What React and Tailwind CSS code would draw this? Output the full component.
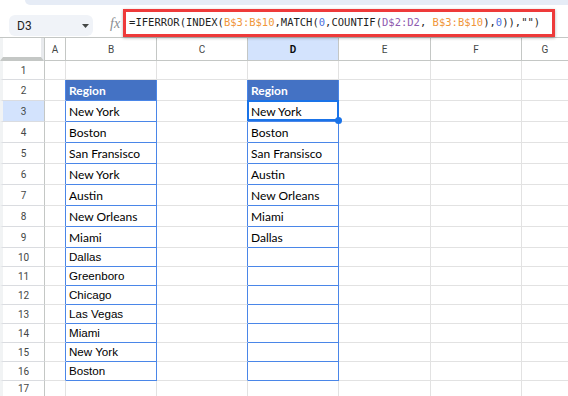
import React from "react";

const GRID = "border-[#e2e2e2]";

const cols = [
  { key: "A", w: "w-[21px]" },
  { key: "B", w: "w-[91px]" },
  { key: "C", w: "w-[91px]" },
  { key: "D", w: "w-[91px]" },
  { key: "E", w: "w-[92px]" },
  { key: "F", w: "w-[91px]" },
];

const bList = ["New York", "Boston", "San Fransisco", "New York", "Austin", "New Orleans", "Miami"];
const dList = ["New York", "Boston", "San Fransisco", "Austin", "New Orleans", "Miami", "Dallas"];
const bList2 = ["Dallas", "Greenboro", "Chicago", "Las Vegas", "Miami", "New York", "Boston"];

const rows = [
  { n: 1, h: "h-[19px]", b: "", d: "" },
  { n: 2, h: "h-[21px]", b: "Region", d: "Region", head: true },
  ...bList.map((b, i) => ({ n: i + 3, h: "h-[21px]", b, d: dList[i], calibri: true })),
  ...bList2.map((b, i) => ({ n: i + 10, h: "h-[19px]", b, d: "" })),
];

function FormulaText() {
  const dark = "text-[#1f1f1f]";
  const orange = "text-[#f0963a]";
  const blue = "text-[#4a6fdc]";
  const purple = "text-[#8e5bb0]";
  return (
    <span className="whitespace-pre font-['DejaVu_Sans_Mono',monospace] text-[10.5px]">
      <span className={dark}>=IFERROR(INDEX(</span>
      <span className={orange}>B$3:B$10</span>
      <span className={dark}>,MATCH(</span>
      <span className={blue}>0</span>
      <span className={dark}>,COUNTIF(</span>
      <span className={purple}>D$2:D2</span>
      <span className={dark}>, </span>
      <span className={orange}>B$3:B$10</span>
      <span className={dark}>),</span>
      <span className={blue}>0</span>
      <span className={dark}>)),""</span>
      <span className={dark}>)</span>
    </span>
  );
}

function TopBar() {
  return (
    <div className="h-[37px] flex flex-col">
      <div className="h-[5px] ml-[25px] bg-[#e6ecf6] rounded-bl-[12px]"></div>
      <div className="flex items-start h-[32px]">
        <div className="ml-[9px] mt-[10px] w-[84px] h-[21px] rounded-[6px] bg-[#f0f3f8] flex items-center justify-between pl-[8px] pr-[4px]">
          <span className="font-['Roboto',sans-serif] text-[12px] text-[#1f1f1f]">D3</span>
          <svg width="7" height="4" viewBox="0 0 7 4">
            <path d="M0 0h7L3.5 4z" fill="#444746" />
          </svg>
        </div>
        <span className="ml-[17px] mt-[11px] italic font-['Liberation_Serif',serif] text-[14px] leading-[16px] text-[#8a8d91]">
          fx
        </span>
        <div className="ml-[3px] mt-[4px] w-[432px] h-[28px] border-[3px] border-[#ee3a3a] bg-white shadow-[0_1px_3px_rgba(0,0,0,0.3)] flex items-center pl-[3px] relative z-10">
          <FormulaText />
        </div>
      </div>
    </div>
  );
}

function ColumnHeader() {
  return (
    <div className="flex h-[24px] border-t border-[#c4c7c5]">
      <div className="w-[45px] shrink-0 border-r border-[#c4c7c5]">
        <div className="h-full border-l-[3px] border-l-[#f1f3f4] border-r-[3px] border-r-[#e8eaed] border-b-[4px] border-b-[#c4c7c5]"></div>
      </div>
      {cols.map((c) => (
        <div
          key={c.key}
          className={`${c.w} shrink-0 border-r border-b border-[#c4c7c5] flex items-center justify-center font-['Roboto',sans-serif] text-[10px] ${
            c.key === "D" ? "bg-[#d3e3fd] font-bold text-[#0b0b0b]" : "text-[#444746]"
          }`}
        >
          {c.key}
        </div>
      ))}
      <div className="flex-1 border-b border-[#c4c7c5] flex items-center justify-center font-['Roboto',sans-serif] text-[10px] text-[#444746]">
        G
      </div>
    </div>
  );
}

function DataCell({ text, head, calibri, width, rightBlue, bottomBlue, children }) {
  const font = head || calibri ? "font-['Lato',sans-serif] text-[12px] pb-[2px]" : "font-['Liberation_Sans',sans-serif] text-[11.6px] pb-[2px]";
  return (
    <div
      className={`${width} shrink-0 border-r border-b ${rightBlue ? "border-r-[#4a86e8]" : "border-r-[#e2e2e2]"} ${
        bottomBlue ? "border-b-[#4a86e8]" : "border-b-[#e2e2e2]"
      } ${head ? "bg-[#4472c4] text-white font-bold" : "text-black"} ${font} leading-[14px] flex items-end pl-[3px] relative`}
    >
      {text}
      {children}
    </div>
  );
}

function Row({ r }) {
  const inTable = r.n >= 2;
  const selected = r.n === 3;
  return (
    <div className={`flex ${r.h}`}>
      <div
        className={`w-[45px] shrink-0 border-l-[3px] border-l-[#f1f3f4] border-r border-r-[#c4c7c5] border-b border-b-[#dadce0] flex items-center justify-center font-['Roboto',sans-serif] text-[10px] text-[#444746] ${
          selected ? "bg-[#d3e3fd]" : "bg-white"
        }`}
      >
        {r.n}
      </div>
      <div className={`w-[21px] shrink-0 border-r border-b ${inTable ? "border-r-[#4a86e8]" : "border-r-[#e2e2e2]"} border-b-[#e2e2e2]`}></div>
      <DataCell text={r.b} head={r.head} calibri={r.calibri} width="w-[91px]" rightBlue={inTable} bottomBlue={inTable} />
      <div className={`w-[91px] shrink-0 border-r border-b ${inTable ? "border-r-[#4a86e8]" : "border-r-[#e2e2e2]"} border-b-[#e2e2e2]`}></div>
      <DataCell text={r.d} head={r.head} calibri={r.calibri} width="w-[91px]" rightBlue={inTable} bottomBlue={inTable}>
        {selected && (
          <div className="absolute -left-px -top-px -right-px bottom-0 border-2 border-[#1a73e8] z-10">
            <div className="absolute -right-[5px] -bottom-[5px] w-[7px] h-[7px] rounded-full bg-[#1a73e8]"></div>
          </div>
        )}
      </DataCell>
      <div className={`w-[92px] shrink-0 border-r border-b ${GRID}`}></div>
      <div className={`w-[91px] shrink-0 border-r border-b ${GRID}`}></div>
      <div className={`flex-1 border-b ${GRID}`}></div>
    </div>
  );
}

export default function App() {
  return (
    <div className="w-[568px] h-[396px] overflow-hidden bg-white flex flex-col">
      <TopBar />
      <ColumnHeader />
      {rows.map((r) => (
        <Row key={r.n} r={r} />
      ))}
      <div className="flex flex-1">
        <div className="w-[45px] shrink-0 border-l-[3px] border-l-[#f1f3f4] border-r border-r-[#c4c7c5] flex items-center justify-center font-['Roboto',sans-serif] text-[10px] text-[#444746]">
          17
        </div>
        <div className={`w-[21px] shrink-0 border-r ${GRID}`}></div>
        <div className={`w-[91px] shrink-0 border-r ${GRID}`}></div>
        <div className={`w-[91px] shrink-0 border-r ${GRID}`}></div>
        <div className={`w-[91px] shrink-0 border-r ${GRID}`}></div>
        <div className={`w-[92px] shrink-0 border-r ${GRID}`}></div>
        <div className={`w-[91px] shrink-0 border-r ${GRID}`}></div>
        <div className="flex-1"></div>
      </div>
    </div>
  );
}
